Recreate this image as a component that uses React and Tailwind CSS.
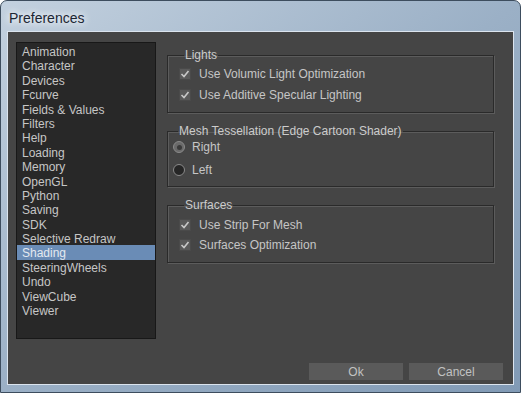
import React from "react";

const items = [
  "Animation","Character","Devices","Fcurve","Fields & Values","Filters","Help","Loading","Memory","OpenGL","Python","Saving","SDK","Selective Redraw","Shading","SteeringWheels","Undo","ViewCube","Viewer",
];

function Check({ label }) {
  return (
    <div className="flex items-center h-[21px] gap-[8px]">
      <div className="w-[12px] h-[12px] bg-[#5a5a5a] border border-[#4a4a4a] flex items-center justify-center">
        <svg width="10" height="10" viewBox="0 0 10 10">
          <path d="M1.5 5 L4 7.5 L8.5 2" fill="none" stroke="#c9c9c9" strokeWidth="1.6" />
        </svg>
      </div>
      <span>{label}</span>
    </div>
  );
}

function Radio({ label, on }) {
  return (
    <div className="flex items-center h-[18px] gap-[7px]">
      <div className={"w-[12px] h-[12px] rounded-full border border-[#8a8a8a] flex items-center justify-center " + (on ? "bg-[#6a6a6a]" : "bg-[#262626]")}>
        {on && <div className="w-[5px] h-[5px] rounded-full bg-[#3a3a3a]" />}
      </div>
      <span>{label}</span>
    </div>
  );
}

function Group({ title, className, children }) {
  return (
    <fieldset className={"border border-[#2a2a2a] shadow-[inset_1px_1px_0_#5c5c5c,1px_1px_0_#5c5c5c] " + className}>
      <legend className="ml-[5px] px-[1px] leading-[14px] text-[#cccccc]">{title}</legend>
      {children}
    </fieldset>
  );
}

export default function App() {
  return (
    <div className="w-[521px] h-[393px] rounded-t-[7px] border border-[#3d4d5e] bg-gradient-to-br from-[#c3d1df] via-[#9bb0c6] to-[#819ab5] flex flex-col text-[12px] text-[#c6c6c6] [font-family:'Liberation_Sans',Arial,sans-serif] overflow-hidden">
      <div className="h-[30px] flex items-center pl-[8px] pt-[4px]">
        <span className="text-[14px] text-[#1c2633] [text-shadow:0_0_6px_#ffffff,0_0_10px_#eef3f8]">Preferences</span>
      </div>
      <div className="mx-[6px] border border-[#dbe4ee] bg-[#454545] h-[354px] flex flex-col">
        <div className="flex pt-[10px] pl-[8px]">
          <div className="w-[140px] h-[297px] bg-[#282828] border border-[#181818] pt-[1px]">
            {items.map((t) => (
              <div
                key={t}
                className={"h-[14.4px] leading-[14.4px] pl-[5px] " + (t === "Shading" ? "bg-[#6a8cb6] text-[#e4e9f0]" : "")}
              >
                <span className="relative top-[1px]">{t}</span>
              </div>
            ))}
          </div>
          <div className="ml-[11px] w-[327px] mt-[6px] flex flex-col">
            <Group title="Lights" className="h-[65px] pl-[11px] pt-[1px]">
              <Check label="Use Volumic Light Optimization" />
              <Check label="Use Additive Specular Lighting" />
            </Group>
            <Group title="Mesh Tessellation (Edge Cartoon Shader)" className="h-[63px] mt-[11px] pl-[5px]">
              <div className="flex flex-col gap-[5px]">
                <Radio label="Right" on />
                <Radio label="Left" />
              </div>
            </Group>
            <Group title="Surfaces" className="h-[65px] mt-[11px] pl-[11px] pt-[3px]">
              <div className="flex flex-col [&>div]:h-[20px]">
                <Check label="Use Strip For Mesh" />
                <Check label="Surfaces Optimization" />
              </div>
            </Group>
          </div>
        </div>
        <div className="mt-auto flex justify-end gap-[6px] pr-[10px] pb-[4px]">
          <div className="w-[94px] h-[17px] bg-[#5a5a5a] flex items-center justify-center text-[#c2c2c2]">Ok</div>
          <div className="w-[94px] h-[17px] bg-[#5a5a5a] flex items-center justify-center text-[#c2c2c2]">Cancel</div>
        </div>
      </div>
    </div>
  );
}
